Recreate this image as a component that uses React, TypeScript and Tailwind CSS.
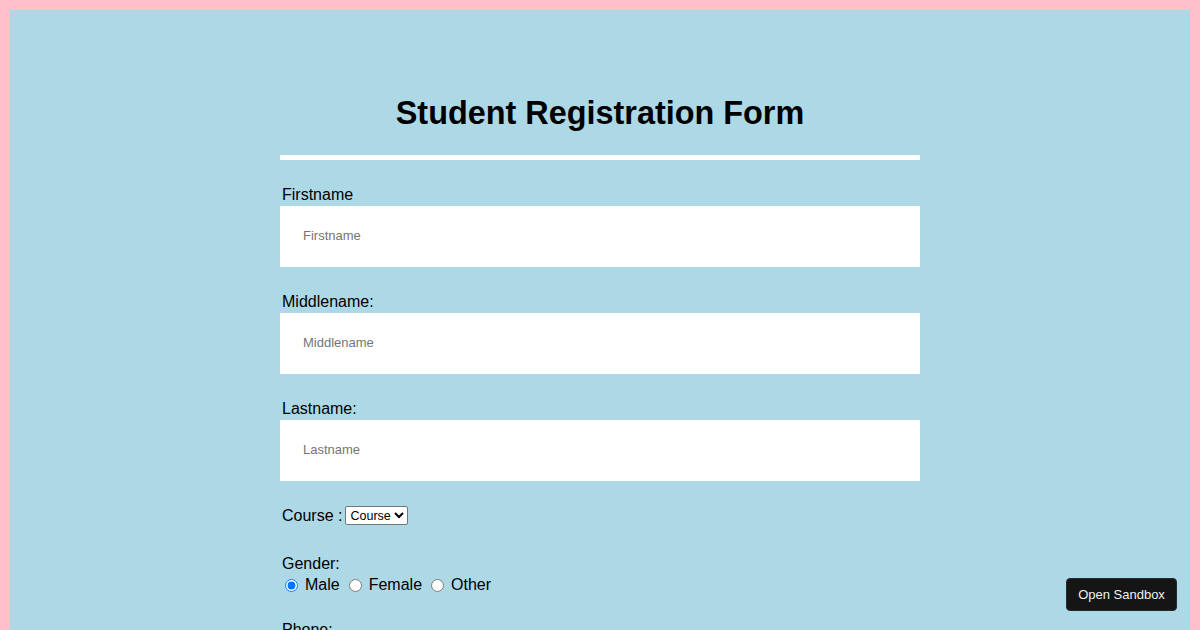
import React from "react";

function Field({ label, ph }: { label: string; ph: string }) {
  return (
    <div className="mb-[25px]">
      <label className="block text-[16px] leading-[18px] pt-[1px] pl-[2px]">{label}</label>
      <input
        type="text"
        placeholder={ph}
        className="block w-full h-[61px] mt-[2px] bg-white pl-[23px] pb-[2px] text-[13px] placeholder:text-[#757575] outline-none"
      />
    </div>
  );
}

export default function App() {
  return (
    <div
      className="h-[630px] overflow-hidden bg-[#ffc0cb] pt-[10px] px-[10px] text-black"
      style={{ fontFamily: '"Liberation Sans", Arial, sans-serif' }}
    >
      <div className="bg-[#add8e6] min-h-[620px] pt-[85px]">
        <div className="w-[640px] mx-auto">
          <h1 className="text-center text-[32.4px] font-bold leading-[37px]">Student Registration Form</h1>
          <div className="h-[5px] bg-white mt-[23px] mb-[25px]" />
          <Field label="Firstname" ph="Firstname" />
          <Field label="Middlename:" ph="Middlename" />
          <Field label="Lastname:" ph="Lastname" />
          <div className="pl-[2px] text-[16px] leading-[19px] flex items-center">
            <span>Course :</span>
            <select className="ml-[3px] w-[63px] text-[12.5px] bg-white border border-[#767676] rounded-[2px] h-[19px] px-0" style={{ fontFamily: '"Liberation Sans", Arial, sans-serif' }}>
              <option>Course</option>
              <option>BCA</option>
              <option>BBA</option>
            </select>
          </div>
          <div className="mt-[29px] pt-[1px] pl-[2px] text-[16px] leading-[18px]">Gender:</div>
          <div className="text-[16px] leading-[18px] mt-[3px] flex items-center">
            <input type="radio" name="g" defaultChecked className="ml-[5px] mr-[7px] w-[13px] h-[13px]" />
            <span>Male</span>
            <input type="radio" name="g" className="ml-[9px] mr-[7px] w-[13px] h-[13px]" />
            <span>Female</span>
            <input type="radio" name="g" className="ml-[9px] mr-[7px] w-[13px] h-[13px]" />
            <span>Other</span>
          </div>
          <div className="mt-[26px] pt-[1px] pl-[2px] text-[16px] leading-[18px]">Phone:</div>
          <div className="h-[200px]" />
        </div>
      </div>
      <button className="fixed right-[23px] bottom-[19px] w-[111px] h-[33px] bg-[#151515] text-[#f0f0f0] text-[13px] rounded-[4px] border border-[#2a2a2a]">
        Open Sandbox
      </button>
    </div>
  );
}
